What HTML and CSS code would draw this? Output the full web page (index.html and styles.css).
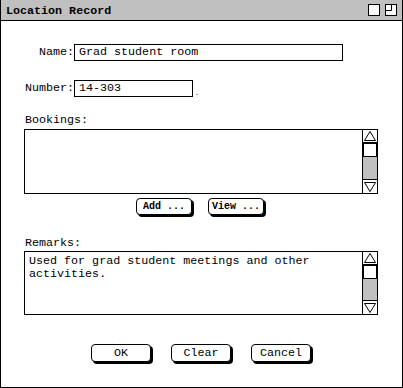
FILE: index.html
```html
<!doctype html>
<html lang="en">
<head>
<meta charset="UTF-8">
<title>Location Record</title>
<link rel="stylesheet" href="styles.css">
</head>
<body>
<div class="window">
	<div class="titlebar">
		<span class="title">Location Record</span>
		<span class="ctrls">
			<svg width="12" height="12" viewBox="0 0 12 12"><rect x="0.5" y="0.5" width="11" height="11" fill="#fff" stroke="#000"/></svg>
			<svg width="12" height="12" viewBox="0 0 12 12"><rect x="0.5" y="0.5" width="11" height="11" fill="#fff" stroke="#000"/><path d="M6.5 0.5V6.5H0.5" fill="none" stroke="#000"/></svg>
		</span>
	</div>

	<div class="content">
		<div class="field name-row">
			<label>Name:</label>
			<div class="input name-input">Grad student room</div>
		</div>
		<div class="field number-row">
			<label>Number:</label>
			<div class="input number-input">14-303</div>
			<span class="dot"></span>
		</div>

		<div class="caption bookings-cap">Bookings:</div>
		<div class="listbox bookings">
			<div class="list-area"></div>
			<div class="scrollbar">
				<div class="sb-up"><svg width="14" height="12" viewBox="0 0 14 12"><polygon points="7,1.5 12.5,10.5 1.5,10.5" fill="none" stroke="#000"/></svg></div>
				<div class="sb-thumb"></div>
				<div class="sb-track"></div>
				<div class="sb-down"><svg width="14" height="13" viewBox="0 0 14 13"><polygon points="1.5,2.5 12.5,2.5 7,11.5" fill="none" stroke="#000"/></svg></div>
			</div>
		</div>
		<div class="btnrow small-btns">
			<button class="btn small">Add ...</button>
			<button class="btn small">View ...</button>
		</div>

		<div class="caption remarks-cap">Remarks:</div>
		<div class="listbox remarks">
			<div class="list-area">Used for grad student meetings and other<br>activities.</div>
			<div class="scrollbar">
				<div class="sb-up"><svg width="14" height="12" viewBox="0 0 14 12"><polygon points="7,1.5 12.5,10.5 1.5,10.5" fill="none" stroke="#000"/></svg></div>
				<div class="sb-thumb"></div>
				<div class="sb-track"></div>
				<div class="sb-down"><svg width="14" height="13" viewBox="0 0 14 13"><polygon points="1.5,2.5 12.5,2.5 7,11.5" fill="none" stroke="#000"/></svg></div>
			</div>
		</div>

		<div class="btnrow main-btns">
			<button class="btn">OK</button>
			<button class="btn">Clear</button>
			<button class="btn">Cancel</button>
		</div>
	</div>
</div>
</body>
</html>
```

FILE: styles.css
```css
body{ margin:0;background:#fff;color:#000;font:11.7px "Liberation Mono","DejaVu Sans Mono",monospace; }
.window{ width:403px;height:388px;box-sizing:border-box;border:1px solid #000;border-top:none; }

.titlebar{ height:20px;background:#c0c0c0;border-bottom:1px solid #000;display:flex;align-items:center;padding:0 5px 0 5px; }
.title{ flex:1;font-weight:bold;line-height:20px;padding-top:1px; }
.ctrls{ display:flex;gap:5px;padding-bottom:1px; }
.ctrls svg{ display:block; }

.content{ display:flex;flex-direction:column; }

.field{ display:flex;height:17px; }
.field label{ width:73px;text-align:right;line-height:17px; }
.input{ box-sizing:border-box;height:17px;border:1px solid #000;padding-left:4px;line-height:15px; }
.name-row{ margin-top:23px; }
.name-input{ width:269px; }
.number-row{ margin-top:19px; }
.number-input{ width:119px; }
.dot{ width:2px;height:1px;background:#999;align-self:flex-end;margin:0 0 2px 3px; }

.caption{ margin-left:24px;line-height:13px;height:13px; }
.bookings-cap{ margin-top:17px; }
.remarks-cap{ margin-top:22px; }

.listbox{ margin-left:23px;width:354px;box-sizing:border-box;border:1px solid #000;display:flex; }
.bookings{ height:65px;margin-top:2px; }
.remarks{ height:64px;margin-top:1px; }
.list-area{ flex:1;padding:3px 4px;line-height:13px; }

.scrollbar{ width:14px;border-left:1px solid #000;display:flex;flex-direction:column; }
.scrollbar svg{ display:block; }
.sb-up{ height:12px;border-bottom:1px solid #000; }
.sb-thumb{ height:14px;box-sizing:border-box;border:1px solid #000;background:#fff; }
.sb-track{ flex:1;background:#c0c0c0; }
.sb-down{ height:13px;border-top:1px solid #000; }

.btnrow{ display:flex;justify-content:center; }
.btn{ box-sizing:border-box;height:18px;width:60px;padding:0;border:1px solid #000;border-radius:4px;background:#fff;color:#000;box-shadow:2px 2px 0 #000;font:inherit;line-height:16px; }
.small-btns{ margin-top:4px;gap:16px;padding-right:3px; }
.small-btns .btn{ width:56px;height:17px;font-size:10px;font-weight:bold;line-height:15px; }
.main-btns{ margin-top:29px;gap:20px;padding-right:1px; }
```
